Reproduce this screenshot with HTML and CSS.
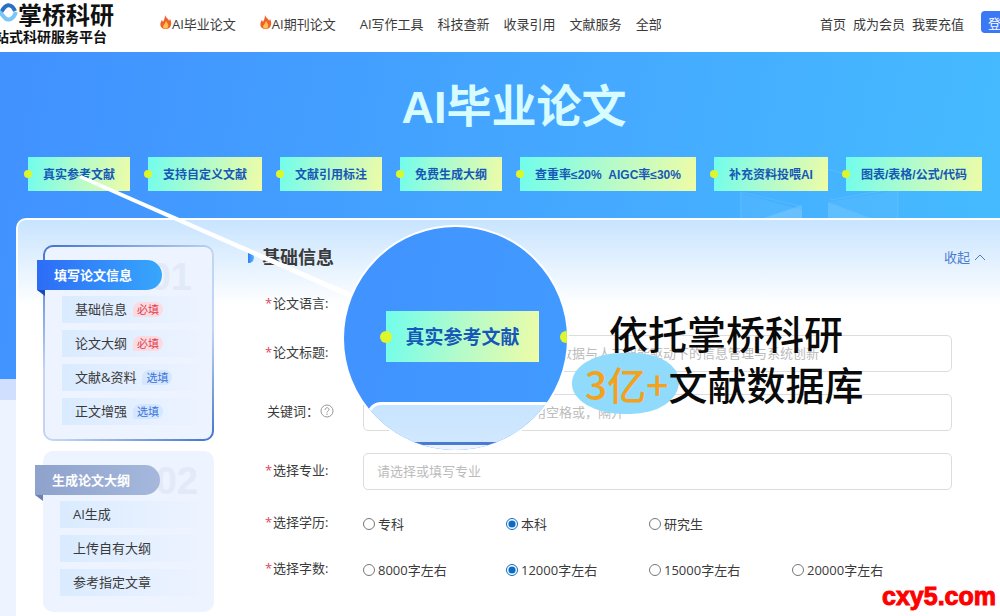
FILE: index.html
```html
<!DOCTYPE html>
<html lang="zh-CN">
<head>
    <meta charset="UTF-8">
    <meta name="viewport" content="width=device-width, initial-scale=1.0">
    <title>AI毕业论文 - 掌桥科研</title>
    <link rel="stylesheet" href="styles.css">
</head>
<body>
    <header class="header">
        <div class="brand">
            <div class="brand-row">
                <svg class="brand-icon" width="18" height="20" viewBox="0 0 18 20" fill="none" stroke-width="4">
                    <path d="M-3 12C1 11 2 7 4 5C7 1 12 1 15 8" stroke="#2a6fc4"/>
                    <path d="M-4 7C0 8 2 12 5 15C8 18 13 17 16 9" stroke="#7cc6f5"/>
                </svg>
                <span class="brand-name">掌桥科研</span>
            </div>
            <div class="brand-slogan">站式科研服务平台</div>
        </div>

        <nav class="nav">
            <a href="#" class="hot">
                <svg class="flame" width="12" height="14" viewBox="0 0 12 14">
                    <path d="M5 0C6 3 9 4 9 6L10 4C12 7 12 14 6 14C0 14-1 9 2 5L3 7C4 5 5 3 5 0Z" fill="#f0602a"/>
                    <path d="M6 6C7 8 9 9 8 12C7 14 4 14 3 12C3 10 5 9 6 6Z" fill="#ffc34d"/>
                </svg>AI毕业论文</a>
            <a href="#" class="hot">
                <svg class="flame" width="12" height="14" viewBox="0 0 12 14">
                    <path d="M5 0C6 3 9 4 9 6L10 4C12 7 12 14 6 14C0 14-1 9 2 5L3 7C4 5 5 3 5 0Z" fill="#f0602a"/>
                    <path d="M6 6C7 8 9 9 8 12C7 14 4 14 3 12C3 10 5 9 6 6Z" fill="#ffc34d"/>
                </svg>AI期刊论文</a>
            <a href="#">AI写作工具</a>
            <a href="#">科技查新</a>
            <a href="#">收录引用</a>
            <a href="#">文献服务</a>
            <a href="#">全部</a>
        </nav>

        <div class="user-nav">
            <a href="#">首页</a>
            <a href="#">成为会员</a>
            <a href="#">我要充值</a>
        </div>
        <button type="button" class="login-button">登录</button>
    </header>

    <main class="page">
        <section class="hero">
            <svg class="hero-cubes" width="170" height="50" viewBox="0 0 170 50" fill="#fff">
                <path d="M0 25L62 42V50H0Z" opacity=".05"/>
                <path d="M62 37V50H24Z" opacity=".15"/>
                <path d="M88 34V50H130Z" opacity=".15"/>
                <path d="M88 34L158 22V50H130Z" opacity=".05"/>
                <path d="M1 50V24L60 38M158 50V20L90 32M84 0L158 22" fill="none" stroke="#fff" opacity=".1"/>
            </svg>
            <h1>AI毕业论文</h1>
            <ul class="tags">
                <li>真实参考文献</li>
                <li>支持自定义文献</li>
                <li>文献引用标注</li>
                <li>免费生成大纲</li>
                <li>查重率≤20%&nbsp; AIGC率≤30%</li>
                <li>补充资料投喂AI</li>
                <li>图表/表格/公式/代码</li>
            </ul>
        </section>

        <div class="panel">
            <aside class="sidebar">
                <section class="step active">
                    <span class="step-number">01</span>
                    <h2>填写论文信息</h2>
                    <ul>
                        <li>基础信息 <span class="badge required">必填</span></li>
                        <li>论文大纲 <span class="badge required">必填</span></li>
                        <li>文献&amp;资料 <span class="badge">选填</span></li>
                        <li>正文增强 <span class="badge">选填</span></li>
                    </ul>
                </section>
                <section class="step">
                    <span class="step-number">02</span>
                    <h2>生成论文大纲</h2>
                    <ul>
                        <li>AI生成</li>
                        <li>上传自有大纲</li>
                        <li>参考指定文章</li>
                    </ul>
                </section>
            </aside>

            <div class="content">
                <div class="content-head">
                    <h2>基础信息</h2>
                    <a href="#" class="collapse">收起
                        <svg width="12" height="8" viewBox="0 0 12 8" fill="none" stroke="#4a7bd0"><path d="M1 7L6 2L11 7"/></svg>
                    </a>
                </div>

                <form class="form">
                    <div class="row">
                        <span class="label required">论文语言:</span>
                    </div>
                    <div class="row">
                        <label class="label required" for="title">论文标题:</label>
                        <input type="text" id="title" placeholder="请输入您的论文题目，例如：大数据与人工智能驱动下的信息管理与系统创新">
                    </div>
                    <div class="row">
                        <label class="label" for="keywords">关键词：
                            <svg class="help" width="14" height="14" viewBox="0 0 14 14" fill="none" stroke="#999">
                                <circle cx="7" cy="7" r="6"/>
                                <path d="M5 6C5 3 9 3 9 5.500C9 7 7 7 7 8.500M7 9.500V11"/>
                            </svg>
                        </label>
                        <input type="text" id="keywords" placeholder="请输入关键词，多个关键词用空格或，隔开">
                    </div>
                    <div class="row">
                        <label class="label required" for="major">选择专业:</label>
                        <input type="text" id="major" placeholder="请选择或填写专业">
                    </div>
                    <div class="row" role="radiogroup" aria-labelledby="degree-label">
                        <span class="label required" id="degree-label">选择学历:</span>
                        <div class="options">
                            <label><input type="radio" name="degree">专科</label>
                            <label><input type="radio" name="degree" checked>本科</label>
                            <label><input type="radio" name="degree">研究生</label>
                        </div>
                    </div>
                    <div class="row" role="radiogroup" aria-labelledby="words-label">
                        <span class="label required" id="words-label">选择字数:</span>
                        <div class="options">
                            <label><input type="radio" name="words">8000字左右</label>
                            <label><input type="radio" name="words" checked>12000字左右</label>
                            <label><input type="radio" name="words">15000字左右</label>
                            <label><input type="radio" name="words">20000字左右</label>
                        </div>
                    </div>
                </form>
            </div>
        </div>
    </main>

    <!-- callout drawn over the page -->
    <svg class="pointer" width="290" height="134" viewBox="0 0 290 134">
        <path d="M2 1L286 125L284 130L0 4Z" fill="#fff"/>
    </svg>
    <div class="lens">
        <div class="lens-tag">真实参考文献</div>
        <div class="lens-dot"></div>
        <div class="lens-panel"></div>
    </div>
    <div class="caption">
        <div class="caption-line">依托掌桥科研</div>
        <div class="caption-line second"><span class="highlight">3亿+</span><span class="caption-text">文献数据库</span></div>
    </div>
    <div class="watermark">cxy5.com</div>
</body>
</html>
```
FILE: styles.css
```css
* {
    box-sizing: border-box;
}
body {
    position: relative;
    display: flex;
    flex-direction: column;
    min-height: 100vh;
    margin: 0;
    overflow-x: hidden;
    font-family: "Open Sans", "Noto Sans CJK SC", sans-serif;
    font-size: 13px;
    line-height: 20px;
    color: #3a3a3a;
    background-color: #fff;
}
h1, h2, ul {
    margin: 0;
    padding: 0;
}
ul {
    list-style: none;
}
a {
    color: inherit;
    text-decoration: none;
}

/* header */
.header {
    display: flex;
    align-items: flex-start;
    height: 52px;
    overflow: hidden;
    white-space: nowrap;
}
.brand {
    flex: 0 0 160px;
    color: #111;
    font-weight: bold;
}
.brand-row {
    display: flex;
    align-items: center;
    height: 30px;
}
.brand-icon {
    margin-bottom: 4px;
}
.brand-name {
    font-size: 24px;
    line-height: 30px;
}
.brand-slogan {
    margin-left: -5px;
    font-size: 14px;
    line-height: 14px;
}
.nav,
.user-nav {
    display: flex;
    align-items: center;
    gap: 14px;
    padding-top: 14px;
}
.nav .hot {
    display: flex;
    margin-right: 10px;
}
.flame {
    margin-top: 1px;
}
.user-nav {
    gap: 7px;
    margin-left: auto;
}
.login-button {
    flex: none;
    width: 54px;
    height: 22px;
    margin: 11px -35px 0 17px;
    padding: 0 7px;
    border: none;
    border-radius: 4px;
    background-color: #3b78f6;
    color: #fff;
    font-family: inherit;
    font-size: 13px;
    text-align: left;
}

/* hero */
.page {
    display: flex;
    flex-direction: column;
    flex: 1;
    background:
        linear-gradient(100deg, #4191ff, #45aaff 60%, #45bcff) 0 0 / 100% 327px no-repeat,
        linear-gradient(#cfdffd, #cfdffd) 0 327px / 100% 21px no-repeat,
        #edf3ff;
}
.hero {
    position: relative;
    padding: 26px 0 27px 28px;
}
.hero-cubes {
    position: absolute;
    right: 90px;
    bottom: 0;
}
h1 {
    position: relative;
    font-family: "Liberation Sans", "Noto Sans CJK SC", sans-serif;
    font-size: 45px;
    line-height: 60px;
    text-align: center;
    color: #d6fcff;
}
.tags {
    position: relative;
    display: flex;
    gap: 18px;
    margin-top: 19px;
    font-family: "Liberation Sans", "Noto Sans CJK SC", sans-serif;
    font-size: 12px;
    font-weight: bold;
    white-space: nowrap;
}
.tags li {
    position: relative;
    padding: 8px 15px 6px;
    background: linear-gradient(100deg, #70fdec, #b4fbca 50%, #eefca6);
    color: #1658b8;
}
.tags li::before {
    content: "";
    position: absolute;
    left: -4px;
    top: 13px;
    width: 8px;
    height: 8px;
    border-radius: 50%;
    background-color: #dcf82a;
}

/* panel */
.panel {
    display: flex;
    flex: 1;
    margin-left: 16px;
    padding: 25px 14px 4px 25px;
    border: 2px solid #fff;
    border-width: 2px 0 0 2px;
    border-radius: 10px 0 0 0;
    background: linear-gradient(#c8e4ff, #fff 86px);
}
.sidebar {
    display: flex;
    flex-direction: column;
    flex: 0 0 171px;
    gap: 10px;
}
.step {
    position: relative;
    padding: 14px 12px 16px 17px;
    border-radius: 10px;
    background-color: #edf3ff;
}
.step.active {
    padding: 13px 10px 14px 17px;
    border: 2px solid transparent;
    background:
        linear-gradient(#edf3ff, #edf3ff) padding-box,
        linear-gradient(145deg, #3f72cc, #c3d5f2 40%, #c3d5f2 65%, #3f72cc) border-box;
}
.step-number {
    position: absolute;
    right: 16px;
    top: 14px;
    font-family: "Liberation Sans", sans-serif;
    font-size: 38px;
    line-height: 32px;
    font-weight: bold;
    color: #e2eaf7;
}
.active .step-number {
    right: 20px;
}
.step h2 {
    position: relative;
    width: 125px;
    margin-left: -25px;
    padding: 5px 17px;
    border-radius: 0 15px 15px 0;
    background: linear-gradient(90deg, #8ea2cc, #a5b8dc);
    color: #fff;
    font-size: 13px;
    line-height: 20px;
}
.step.active h2 {
    background: linear-gradient(90deg, #2d6cf6, #37a7fc);
}
.step h2::after {
    content: "";
    position: absolute;
    left: 0;
    top: 30px;
    border-top: 6px solid #6c80ad;
    border-left: 8px solid transparent;
}
.step.active h2::after {
    border-top-color: #1a4bb8;
}
.step ul {
    display: flex;
    flex-direction: column;
    gap: 7px;
    margin-top: 6px;
}
.step li {
    display: flex;
    align-items: center;
    gap: 6px;
    height: 27px;
    padding: 0 0 2px 13px;
    background: linear-gradient(90deg, #daebff, #edf3ff);
}
.badge {
    margin-top: 2px;
    padding: 0 4px;
    border-radius: 8px 8px 8px 2px;
    background-color: #d5e6ff;
    color: #3a72d8;
    font-size: 11px;
    line-height: 15px;
}
.badge.required {
    background-color: #fbdbe2;
    color: #e23b4c;
}

/* form */
.content {
    flex: 1;
    min-width: 0;
    padding-left: 34px;
}
.content-head {
    display: flex;
    justify-content: space-between;
    align-items: center;
    height: 24px;
}
.content-head h2 {
    display: flex;
    align-items: center;
    gap: 8px;
    font-size: 18px;
    line-height: 24px;
}
.content-head h2::before {
    content: "";
    width: 6px;
    height: 11px;
    border-radius: 0 6px 6px 0;
    background: linear-gradient(90deg, #2f7df6, #5ab5ff);
}
.collapse {
    display: flex;
    align-items: center;
    gap: 4px;
    color: #4a7bd0;
}
.form {
    display: flex;
    flex-direction: column;
    gap: 22px;
    margin: 24px 34px 0 17px;
}
.row {
    display: flex;
    align-items: center;
    min-height: 20px;
}
.label {
    display: flex;
    align-items: center;
    flex: 0 0 98px;
    padding: 0 0 2px 2px;
    margin-bottom: 2px;
}
.label.required {
    padding-left: 0;
}
.label.required::before {
    content: "*";
    width: 8px;
    color: #e0455a;
}
.help {
    margin-left: 1px;
}
.row:first-child .label {
    padding-bottom: 0;
    margin-bottom: 0;
}
.row input[type="text"] {
    flex: 1;
    min-width: 0;
    height: 37px;
    padding: 0 13px 2px;
    border: 1px solid #dcdcdc;
    border-radius: 5px;
    background-color: #fff;
    font-family: inherit;
    font-size: 13px;
}
.row input::placeholder {
    color: #bbb;
}
.options {
    display: grid;
    flex: 1;
    grid-template-columns: repeat(4, minmax(0, 143px));
    white-space: nowrap;
}
.options label {
    display: flex;
    align-items: center;
    gap: 3px;
    height: 24px;
}
.options input {
    width: 12px;
    height: 12px;
    margin: 0;
    accent-color: #0a6cc4;
}

/* callout */
.pointer {
    position: absolute;
    left: 79px;
    top: 174px;
}
.lens {
    position: absolute;
    left: 342px;
    top: 225px;
    width: 227px;
    height: 227px;
    border: 2px solid #fff;
    border-radius: 50%;
    background: linear-gradient(100deg, #4192ff, #419bff);
    overflow: hidden;
}
.lens-tag {
    position: absolute;
    left: 42px;
    top: 84px;
    width: 153px;
    padding: 14px 0 12px;
    background: linear-gradient(100deg, #70fdec, #b4fbca 50%, #eefca6);
    color: #1658b8;
    font-size: 19px;
    line-height: 25px;
    font-weight: bold;
    text-align: center;
}
.lens-tag::before,
.lens-dot {
    content: "";
    position: absolute;
    left: -6px;
    top: 20px;
    width: 12px;
    height: 12px;
    border-radius: 50%;
    background-color: #dcf82a;
}
.lens-dot {
    left: 216px;
    top: 104px;
}
.lens-panel {
    position: absolute;
    left: 23px;
    top: 175px;
    width: 220px;
    height: 60px;
    border: 3px solid #fff;
    border-radius: 14px;
    background: linear-gradient(#c8e4ff, #d4eaff);
}
.lens-panel::before {
    content: "";
    position: absolute;
    left: 37px;
    top: 37px;
    width: 120px;
    height: 30px;
    border-top: 3px solid #4a7bd0;
    background-color: #edf3ff;
}
.caption {
    position: absolute;
    left: 572px;
    top: 307px;
    color: #0a0a0a;
    font-family: "Noto Sans CJK SC", sans-serif;
    font-size: 39px;
    line-height: 51px;
    font-weight: 500;
    white-space: nowrap;
}
.caption-line {
    padding-left: 37px;
}
.caption-line.second {
    display: flex;
    padding-left: 0;
}
.highlight {
    height: 61px;
    margin: -5px -11px 0 0;
    padding: 5px 11px 5px 13px;
    border-radius: 50px 44px 48px 52px / 30px 28px 32px 30px;
    background-color: #90dbfc;
    color: #f4a11c;
}
.caption-text {
    position: relative;
}
.watermark {
    position: absolute;
    right: 4px;
    top: 580px;
    color: #f00;
    font-family: "Liberation Sans Narrow", "Liberation Sans", sans-serif;
    font-size: 25px;
    line-height: 32px;
    font-weight: bold;
    -webkit-text-stroke: 1px #f00;
}
```
